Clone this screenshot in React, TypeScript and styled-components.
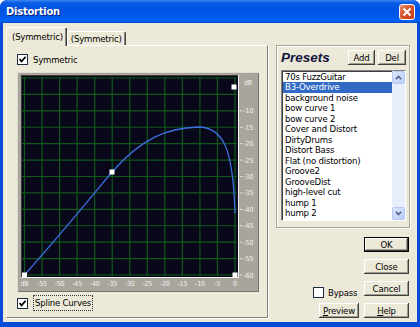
import React from 'react';
import styled, { createGlobalStyle } from 'styled-components';

const UI_FONT = '"DejaVu Sans Condensed", "DejaVu Sans", sans-serif';

const GlobalStyle = createGlobalStyle`
  html, body {
    margin: 0;
    padding: 0;
    background: #ffffff;
  }
  body {
    width: 420px;
    height: 327px;
    overflow: hidden;
    font-family: ${UI_FONT};
    font-size: 9.5px;
    letter-spacing: -0.2px;
    color: #000;
  }
`;

const Window = styled.div`
  width: 420px;
  height: 327px;
  display: flex;
  flex-direction: column;
  background: #0a4ad8;
  border-radius: 7px 7px 0 0;
  overflow: hidden;
`;

const TitleBar = styled.div`
  flex: none;
  height: 23px;
  display: flex;
  align-items: center;
  justify-content: space-between;
  padding: 0 5px 0 6px;
  background: linear-gradient(to bottom, #3d8af2 0%, #0a5ce6 12%, #0054e3 40%, #0059ec 75%, #0062f6 90%, #0047cf 100%);
`;

const Title = styled.span`
  font-weight: bold;
  font-size: 11px;
  letter-spacing: -0.2px;
  color: #fff;
  text-shadow: 1px 1px #0a1e7a;
`;

const CloseButton = styled.div`
  width: 16px;
  height: 16px;
  box-sizing: border-box;
  border: 1px solid #fff;
  border-radius: 3px;
  background: linear-gradient(135deg, #e98d6c 0%, #d8532b 50%, #c13a12 100%);
  display: flex;
  align-items: center;
  justify-content: center;
`;

const Frame = styled.div`
  flex: 1;
  display: flex;
  padding: 0 3px 5px 3px;
`;

const Body = styled.div`
  flex: 1;
  display: flex;
  gap: 8px;
  padding: 4px 7px 4px 3px;
  background: #ece9d8;
`;

const LeftCol = styled.div`
  width: 262px;
  display: flex;
  flex-direction: column;
`;

const TabRow = styled.div`
  height: 18px;
  display: flex;
  align-items: flex-end;
`;

const Tab = styled.div<{ $active?: boolean }>`
  position: relative;
  z-index: ${p => (p.$active ? 2 : 1)};
  box-sizing: border-box;
  height: ${p => (p.$active ? '19px' : '14px')};
  margin-bottom: ${p => (p.$active ? '-1px' : '0')};
  padding: ${p => (p.$active ? '2px 3px 0 5px' : '0 3px 0 3px')};
  background: #ece9d8;
  border-left: 1px solid #fff;
  border-top: 1px solid #fff;
  border-right: 1px solid #404040;
  box-shadow: inset -1px 0 #8a877c;
  border-radius: 2px 2px 0 0;
  line-height: 13px;
  white-space: nowrap;
`;

const Panel = styled.div`
  position: relative;
  z-index: 1;
  height: 273px;
  box-sizing: border-box;
  border: 1px solid;
  border-color: #fff #808080 #808080 #fff;
  box-shadow: 1px 1px 0 #fff;
  padding: 6px 0 0 10px;
  display: flex;
  flex-direction: column;
`;

const CheckRow = styled.label`
  display: flex;
  align-items: center;
  gap: 5px;
  height: 14px;
`;

const Box = styled.span`
  width: 11px;
  height: 11px;
  box-sizing: border-box;
  border: 1px solid #1c2a40;
  background: #fff;
  display: flex;
  align-items: center;
  justify-content: center;
`;

const FocusLabel = styled.span`
  border: 1px dotted #333;
  padding: 1px 1px;
  line-height: 12px;
`;

const GraphBox = styled.div`
  width: 242px;
  height: 220px;
  margin: 6px 0 4px 0;
  background: #a9a59c;
  box-shadow: inset 1px 1px #dedbd0, inset -1px -1px #77736a;
  svg {
    display: block;
  }
`;

const RightCol = styled.div`
  width: 134px;
  display: flex;
  flex-direction: column;
`;

const Group = styled.div`
  margin-top: 18px;
  height: 183px;
  box-sizing: border-box;
  border: 1px solid #a8a596;
  box-shadow: inset 1px 1px #fff, 1px 1px 0 #fff;
  padding: 2px 3px 6px 4px;
  display: flex;
  flex-direction: column;
`;

const GroupHeader = styled.div`
  height: 20px;
  display: flex;
  align-items: center;
  gap: 3px;
`;

const GroupTitle = styled.span`
  flex: 1;
  font-family: "Liberation Sans", Arial, sans-serif;
  font-weight: bold;
  font-style: italic;
  font-size: 13.5px;
  letter-spacing: 0;
  color: #14143c;
`;

const Button = styled.div<{ $w?: number; $default?: boolean }>`
  width: ${p => p.$w ?? 45}px;
  height: 15px;
  box-sizing: border-box;
  display: flex;
  align-items: center;
  justify-content: center;
  background: #ece9d8;
  border: ${p => (p.$default ? '1px solid #000' : 'none')};
  box-shadow: inset -1px -1px #404040, inset 1px 1px #fff, inset -2px -2px #9d9a8e;
  line-height: 13px;
`;

const ListBox = styled.div`
  margin-top: 2px;
  height: 152px;
  box-sizing: border-box;
  border: 1px solid;
  border-color: #808080 #fff #fff #808080;
  box-shadow: inset 1px 1px #404040;
  background: #fff;
  display: flex;
  overflow: hidden;
`;

const Items = styled.div`
  flex: 1;
  padding: 1px 0 0 1px;
  overflow: hidden;
`;

const Item = styled.div<{ $selected?: boolean }>`
  height: 10.5px;
  line-height: 10.5px;
  padding-left: 2px;
  white-space: nowrap;
  background: ${p => (p.$selected ? '#316ac5' : 'transparent')};
  color: ${p => (p.$selected ? '#fff' : '#000')};
`;

const ScrollBar = styled.div`
  width: 13px;
  display: flex;
  flex-direction: column;
  background: #eef2fb;
`;

const ScrollArrow = styled.div`
  width: 13px;
  height: 13px;
  box-sizing: border-box;
  border: 1px solid #b7c9f2;
  border-radius: 2px;
  background: linear-gradient(135deg, #dce7fd, #b9cdf8);
  display: flex;
  align-items: center;
  justify-content: center;
`;

const ScrollTrack = styled.div`
  flex: 1;
  background: #e8eefb;
`;

const ButtonGrid = styled.div`
  margin-top: 9px;
  display: grid;
  grid-template-columns: 46px 45px;
  grid-template-rows: repeat(4, 15px);
  column-gap: 5px;
  row-gap: 7px;
  justify-content: end;
  padding-right: 1px;
`;

const GridButton = styled(Button)<{ $col: number; $row: number }>`
  grid-column: ${p => p.$col};
  grid-row: ${p => p.$row};
  justify-self: end;
`;

const BypassRow = styled(CheckRow)`
  grid-column: 1;
  grid-row: 3;
  align-self: end;
  margin-bottom: -3px;
  gap: 4px;
`;

const presets = [
  '70s FuzzGuitar',
  'B3-Overdrive',
  'background noise',
  'bow curve 1',
  'bow curve 2',
  'Cover and Distort',
  'DirtyDrums',
  'Distort Bass',
  'Flat (no distortion)',
  'Groove2',
  'GrooveDist',
  'high-level cut',
  'hump 1',
  'hump 2',
  'high C',
];

const Check = () => (
  <svg width="9" height="9" viewBox="0 0 9 9">
    <path d="M1.5 4.2 L3.6 6.4 L7.6 1.8" fill="none" stroke="#000" strokeWidth="1.7" />
  </svg>
);

const GX0 = 7.5;
const GX1 = 218;
const GY0 = 6;
const GY1 = 203;

const Graph = () => {
  const xs = Array.from({ length: 13 }, (_, i) => GX0 + ((GX1 - GX0) / 12) * i);
  const ys = Array.from({ length: 13 }, (_, i) => GY0 + ((GY1 - GY0) / 12) * i);
  const pts: [number, number][] = [
    [GX0, GY1],
    [95, 100],
    [217, 15],
    [GX1, GY1],
  ];
  return (
    <svg width="242" height="220" viewBox="0 0 242 220">
      <rect x="4" y="3" width="217" height="202" fill="#08081a" />
      <line x1="4" y1="3.5" x2="221" y2="3.5" stroke="#3c3a34" />
      <line x1="4.5" y1="3" x2="4.5" y2="205" stroke="#3c3a34" />
      <line x1="221.5" y1="3" x2="221.5" y2="206" stroke="#f4f4f4" />
      <line x1="4" y1="205.5" x2="222" y2="205.5" stroke="#f4f4f4" />
      {xs.map((x, i) => (
        <line key={`v${i}`} x1={x} y1="5" x2={x} y2="204" stroke="#11581a" strokeWidth="1.2" />
      ))}
      {ys.map((y, i) => (
        <line key={`h${i}`} x1="5" y1={y} x2="220" y2={y} stroke="#11581a" strokeWidth="1.2" />
      ))}
      <path
        d="M7.5 203 C50 155 80 118 95 100 C125 66 150 56 181 55 C208 55 216 80 218 141"
        fill="none"
        stroke="#3d6fe0"
        strokeWidth="1.3"
      />
      {pts.map(([x, y], i) => (
        <rect key={`p${i}`} x={x - 2.5} y={y - 2.5} width="5" height="5" fill="#fff" />
      ))}
      <g fontSize="7" fill="#f2f2f2">
        <text x="227" y="12.5">dB</text>
        {ys.slice(2).map((y, i) => (
          <g key={`r${i}`}>
            <line x1="223" y1={y} x2="225.5" y2={y} stroke="#f2f2f2" strokeWidth="0.8" />
            <text x="226.5" y={y + 2.5}>{`-${(i + 2) * 5}`}</text>
          </g>
        ))}
        {xs.map((x, i) => (
          <text key={`b${i}`} x={x} y="214" textAnchor="middle">
            {i === 0 ? 'dB' : i === 12 ? '0' : `-${60 - i * 5}`}
          </text>
        ))}
      </g>
    </svg>
  );
};

export default function App() {
  return (
    <>
      <GlobalStyle />
      <Window>
        <TitleBar>
          <Title>Distortion</Title>
          <CloseButton>
            <svg width="10" height="10" viewBox="0 0 10 10">
              <path d="M1.5 1.5 L8.5 8.5 M8.5 1.5 L1.5 8.5" stroke="#fff" strokeWidth="2" />
            </svg>
          </CloseButton>
        </TitleBar>
        <Frame>
          <Body>
            <LeftCol>
              <TabRow>
                <Tab $active>(Symmetric)</Tab>
                <Tab>(Symmetric)</Tab>
              </TabRow>
              <Panel>
                <CheckRow>
                  <Box>
                    <Check />
                  </Box>
                  <span>Symmetric</span>
                </CheckRow>
                <GraphBox>
                  <Graph />
                </GraphBox>
                <CheckRow>
                  <Box>
                    <Check />
                  </Box>
                  <FocusLabel>Spline Curves</FocusLabel>
                </CheckRow>
              </Panel>
            </LeftCol>
            <RightCol>
              <Group>
                <GroupHeader>
                  <GroupTitle>Presets</GroupTitle>
                  <Button $w={27}>Add</Button>
                  <Button $w={28}>Del</Button>
                </GroupHeader>
                <ListBox>
                  <Items>
                    {presets.map((p, i) => (
                      <Item key={p} $selected={i === 1}>
                        {p}
                      </Item>
                    ))}
                  </Items>
                  <ScrollBar>
                    <ScrollArrow>
                      <svg width="7" height="5" viewBox="0 0 7 5">
                        <path d="M0.8 4.2 L3.5 1.5 L6.2 4.2" fill="none" stroke="#4d6185" strokeWidth="1.6" />
                      </svg>
                    </ScrollArrow>
                    <ScrollTrack />
                    <ScrollArrow>
                      <svg width="7" height="5" viewBox="0 0 7 5">
                        <path d="M0.8 0.8 L3.5 3.5 L6.2 0.8" fill="none" stroke="#4d6185" strokeWidth="1.6" />
                      </svg>
                    </ScrollArrow>
                  </ScrollBar>
                </ListBox>
              </Group>
              <ButtonGrid>
                <GridButton $col={2} $row={1} $default>OK</GridButton>
                <GridButton $col={2} $row={2}>Close</GridButton>
                <BypassRow>
                  <Box />
                  <span>Bypass</span>
                </BypassRow>
                <GridButton $col={2} $row={3}>Cancel</GridButton>
                <GridButton $col={1} $row={4} $w={40}>
                  <span><u>P</u>review</span>
                </GridButton>
                <GridButton $col={2} $row={4}>
                  <span><u>H</u>elp</span>
                </GridButton>
              </ButtonGrid>
            </RightCol>
          </Body>
        </Frame>
      </Window>
    </>
  );
}
